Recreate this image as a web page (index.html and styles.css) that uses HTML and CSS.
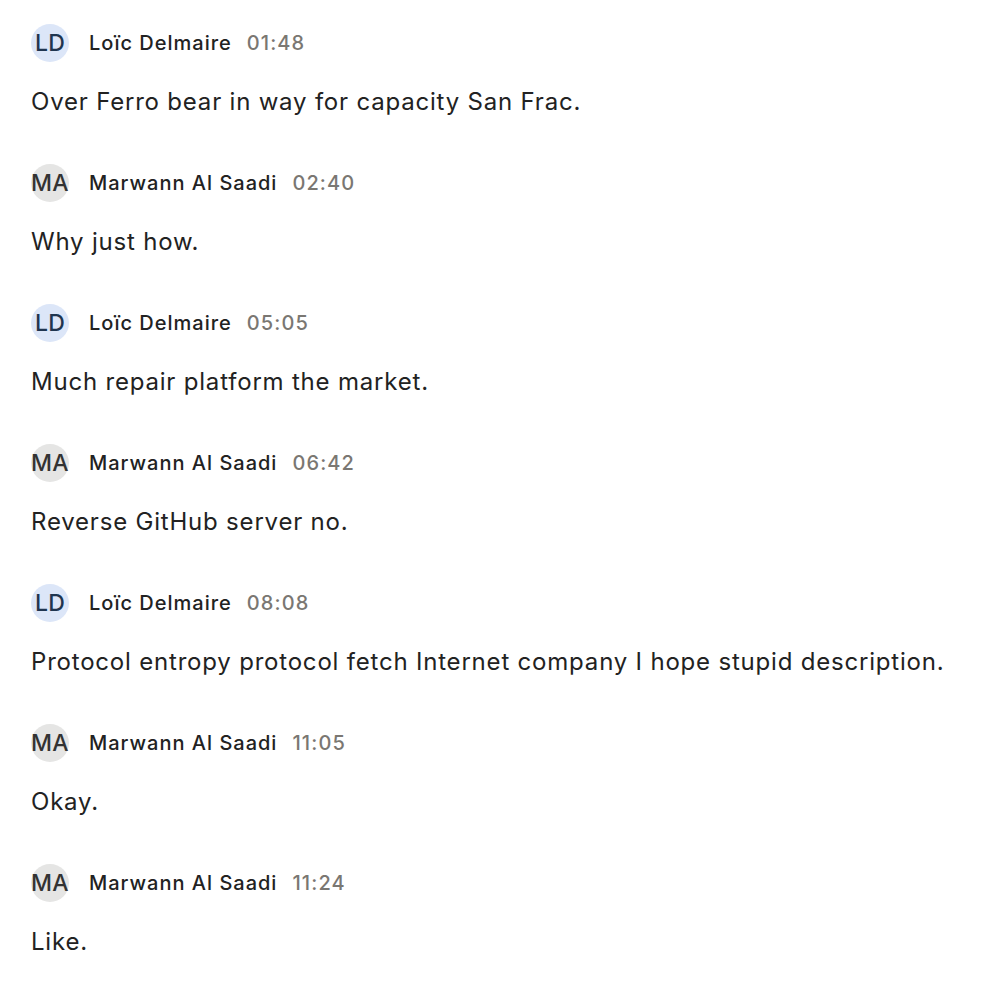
FILE: index.html
```html
<!DOCTYPE html>
<html>
<head>
<meta charset="utf-8">
<link rel="stylesheet" href="styles.css">
</head>
<body>
<div class="feed">
  <div class="msg">
    <div class="head"><span class="avatar ld">LD</span><span class="name">Loïc Delmaire</span><span class="time">01:48</span></div>
    <p class="text">Over Ferro bear in way for capacity San Frac.</p>
  </div>
  <div class="msg">
    <div class="head"><span class="avatar ma">MA</span><span class="name">Marwann Al Saadi</span><span class="time">02:40</span></div>
    <p class="text">Why just how.</p>
  </div>
  <div class="msg">
    <div class="head"><span class="avatar ld">LD</span><span class="name">Loïc Delmaire</span><span class="time">05:05</span></div>
    <p class="text">Much repair platform the market.</p>
  </div>
  <div class="msg">
    <div class="head"><span class="avatar ma">MA</span><span class="name">Marwann Al Saadi</span><span class="time">06:42</span></div>
    <p class="text">Reverse GitHub server no.</p>
  </div>
  <div class="msg">
    <div class="head"><span class="avatar ld">LD</span><span class="name">Loïc Delmaire</span><span class="time">08:08</span></div>
    <p class="text">Protocol entropy protocol fetch Internet company I hope stupid description.</p>
  </div>
  <div class="msg">
    <div class="head"><span class="avatar ma">MA</span><span class="name">Marwann Al Saadi</span><span class="time">11:05</span></div>
    <p class="text">Okay.</p>
  </div>
  <div class="msg">
    <div class="head"><span class="avatar ma">MA</span><span class="name">Marwann Al Saadi</span><span class="time">11:24</span></div>
    <p class="text">Like.</p>
  </div>
</div>
</body>
</html>
```
FILE: styles.css
```css
html, body {
  margin: 0;
  padding: 0;
  background: #ffffff;
}
body {
  font-family: Inter, "Noto Sans", sans-serif;
  color: #222222;
}
.feed {
  display: flex;
  flex-direction: column;
  gap: 46px;
  padding: 24px 31px;
}
.msg {
  display: flex;
  flex-direction: column;
  gap: 24px;
}
.head {
  display: flex;
  align-items: center;
  height: 38px;
}
.avatar {
  flex: none;
  width: 38px;
  height: 38px;
  border-radius: 50%;
  display: flex;
  align-items: center;
  justify-content: center;
  font-size: 23px;
  font-weight: 500;
  letter-spacing: 0.3px;
  margin-right: 20px;
  white-space: nowrap;
}
.avatar.ld {
  background: #dce6f8;
  color: #1f3550;
}
.avatar.ma {
  background: #e5e5e4;
  color: #333333;
}
.name {
  font-size: 20px;
  font-weight: 500;
  letter-spacing: 1px;
  color: #222222;
  margin-right: 15px;
}
.time {
  font-size: 20px;
  font-weight: 500;
  letter-spacing: 1.1px;
  color: #7a7772;
}
.text {
  margin: 0;
  font-size: 24px;
  line-height: 32px;
  letter-spacing: 0.8px;
  color: #222222;
}
```
